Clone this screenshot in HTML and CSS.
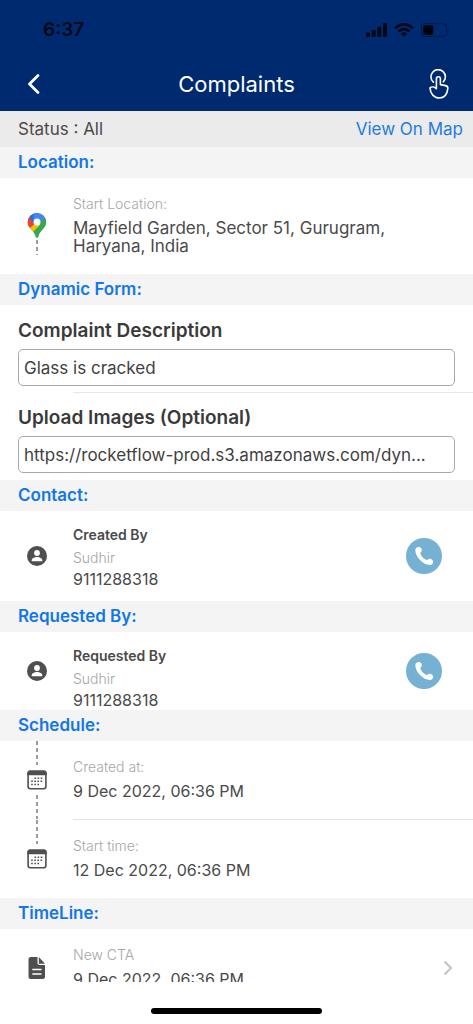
FILE: index.html
```
<!DOCTYPE html>
<html lang="en">
<head>
<meta charset="utf-8">
<meta name="viewport" content="width=device-width, initial-scale=1">
<title>Complaints</title>
<link rel="stylesheet" href="styles.css">
</head>
<body>
<svg class="defs" aria-hidden="true">
  <symbol id="person" viewBox="0 0 20 20">
    <circle cx="10" cy="10" r="10" fill="#4f4f4f"/>
    <circle cx="10" cy="7" r="2.9" fill="#fff"/>
    <path d="M4.7 15.2v-.9c0-2 3-3.300 5.300-3.300s5.300 1.300 5.300 3.300v.9z" fill="#fff"/>
  </symbol>
  <symbol id="calendar" viewBox="0 0 20 20">
    <rect x="1.100" y="1.400" width="17.800" height="17.300" rx="2.200" fill="#fff" stroke="#4f4f4f" stroke-width="1.600"/>
    <path d="M.3 5.200V3Q.3.600 2.800.600h14.400Q19.700.600 19.700 3v2.200z" fill="#4f4f4f"/>
    <path d="M7.500 8.300h8.500M4.200 11.300h12M4.200 14.500h9" stroke="#4f4f4f" stroke-width="1.500" stroke-dasharray="1.600 1.500" fill="none"/>
  </symbol>
  <symbol id="phone" viewBox="0 0 36 36">
    <circle cx="18" cy="18" r="18" fill="#74b1d2"/>
    <path d="M9.400 11.600c.3-2 2.200-3 4.100-2.500 2 .6 2.900 2.700 2 4.500-.4.700-1 1.200-1.300 1.700.9 2.900 3.300 5.500 6.200 6.700.9-.1 1.300-.8 2.200-1.100 1.900-.7 4 .3 4.500 2.200.5 2-.8 3.700-2.800 3.900-3.500.2-7.200-1.600-10.300-4.900-3.200-3.400-5-7.200-4.600-10.500z" fill="#fff"/>
  </symbol>
</svg>

<div class="screen">
  <header class="header">
    <div class="statusbar">
      <span class="clock">6:37</span>
      <span class="signals">
        <svg width="21" height="14" viewBox="0 0 21 14" fill="#000818"><rect y="9.500" width="4" height="4.500" rx="1"/><rect x="5.700" y="7" width="4" height="7" rx="1"/><rect x="11.300" y="3.800" width="4" height="10.200" rx="1"/><rect x="17" width="4" height="14" rx="1"/></svg>
        <svg width="20" height="14" viewBox="0 0 20 14" fill="none" stroke="#000818" stroke-width="2.600"><path d="M1 5.200Q10-2.800 19 5.200M4.400 8.600Q10 3.700 15.600 8.600"/><path d="M6.900 10.700Q10 8 13.100 10.700L10 13.800z" fill="#000818" stroke="none"/></svg>
        <svg width="29" height="14" viewBox="0 0 29 14"><rect x=".6" y=".6" width="25" height="12.800" rx="3.500" fill="none" stroke="#001c50" stroke-width="1.200"/><rect x="2.300" y="2.300" width="10" height="9.400" rx="1.500" fill="#00040c"/><path d="M27 4.500q2 2.500 0 5z" fill="#001c50"/></svg>
      </span>
    </div>
    <div class="navbar">
      <button class="nav-btn" aria-label="Back">
        <svg width="14" height="20" viewBox="0 0 14 20"><path d="M11 1.500 2.500 10l8.500 8.500" fill="none" stroke="#fff" stroke-width="2.700" stroke-linecap="round" stroke-linejoin="round"/></svg>
      </button>
      <h1 class="title">Complaints</h1>
      <button class="nav-btn nav-btn-end" aria-label="Actions">
        <svg width="20" height="30" viewBox="0 0 20 30" fill="none" stroke="#fff" stroke-width="1.600" stroke-linecap="round" stroke-linejoin="round"><path d="M4.400 13.200a7.200 7.200 0 1 1 10-.4"/><path d="M7.400 19.600V9.800a2 2 0 0 1 4 0v5.800l5.200 1c1.700.4 2.400 1.500 2.200 3.100-.5 5.300-3.200 9.300-8.500 9.300C5 29 1.300 24.800 1 18.900c1.700-1.500 4.500-1.100 6.400.7z"/></svg>
      </button>
    </div>
  </header>

  <main class="content">
    <div class="summary"><span>Status : All</span><a class="map-link" href="#map">View On Map</a></div>

    <h2 class="section-head">Location:</h2>
    <div class="row">
      <div class="rail">
        <span class="dash dash-none dash-long"></span>
        <svg class="icon" width="20" height="25" viewBox="0 0 20 25">
          <clipPath id="pin"><path d="M10 0a9.300 9.300 0 0 1 9.300 9.300c0 6-6.800 8.300-7.900 14.500-.3 1.500-2.500 1.500-2.800 0C7.500 17.600.7 15.300.7 9.300A9.300 9.300 0 0 1 10 0z"/></clipPath>
          <g clip-path="url(#pin)"><path fill="#34a853" d="M0 0h20v25H0z"/><path fill="#fbbc04" d="M0 8 8 8l5 4-9 9-4-4z"/><path fill="#ea4335" d="M0 2 4 2l6 7-8.500 7H0z"/><path fill="#1a73e8" d="M2 3 6-2l6 5-6 7z"/><path fill="#4285f4" d="M7-1h12v6l-9 5-4-3z"/></g>
          <circle cx="10" cy="9" r="3.500" fill="#fff"/>
        </svg>
        <span class="dash dash-short"></span>
      </div>
      <div class="details">
        <p class="label">Start Location:</p>
        <p class="value">Mayfield Garden, Sector 51, Gurugram, Haryana, India</p>
      </div>
    </div>

    <h2 class="section-head">Dynamic Form:</h2>
    <form class="form">
      <div class="field">
        <label class="field-label" for="description">Complaint Description</label>
        <input class="field-input" id="description" type="text" value="Glass is cracked">
      </div>
      <div class="field">
        <label class="field-label" for="images">Upload Images (Optional)</label>
        <input class="field-input" id="images" type="text" value="https://rocketflow-prod.s3.amazonaws.com/dyn...">
      </div>
    </form>

    <h2 class="section-head">Contact:</h2>
    <div class="row contact contact-roomy">
      <div class="rail rail-center"><svg width="20" height="20"><use href="#person"/></svg></div>
      <div class="details">
        <h3 class="name">Created By</h3>
        <p class="label contact-label">Sudhir</p>
        <p class="value value-number">9111288318</p>
      </div>
      <button class="call" aria-label="Call Created By"><svg width="36" height="36"><use href="#phone"/></svg></button>
    </div>

    <h2 class="section-head">Requested By:</h2>
    <div class="row contact">
      <div class="rail rail-center"><svg width="20" height="20"><use href="#person"/></svg></div>
      <div class="details">
        <h3 class="name">Requested By</h3>
        <p class="label contact-label">Sudhir</p>
        <p class="value value-number">9111288318</p>
      </div>
      <button class="call" aria-label="Call Requested By"><svg width="36" height="36"><use href="#phone"/></svg></button>
    </div>

    <h2 class="section-head">Schedule:</h2>
    <div class="row">
      <div class="rail"><span class="dash"></span><svg class="icon" width="20" height="20"><use href="#calendar"/></svg><span class="dash"></span></div>
      <div class="details">
        <p class="label">Created at:</p>
        <p class="value value-number">9 Dec 2022, 06:36 PM</p>
      </div>
    </div>
    <div class="divider"></div>
    <div class="row">
      <div class="rail"><span class="dash"></span><svg class="icon" width="20" height="20"><use href="#calendar"/></svg><span class="dash dash-none"></span></div>
      <div class="details">
        <p class="label">Start time:</p>
        <p class="value value-number">12 Dec 2022, 06:36 PM</p>
      </div>
    </div>

    <h2 class="section-head">TimeLine:</h2>
    <a class="row" href="#cta">
      <div class="rail rail-center"><svg width="18" height="22" viewBox="0 0 18 22"><path d="M3 0h6.500v6Q9.500 8 11.500 8H17v11.500Q17 22 14.500 22H3Q.5 22 .5 19.500v-17Q.5 0 3 0z" fill="#4f4f4f"/><path d="M10.800 0 17 6.700h-6.200z" fill="#4f4f4f"/><path d="M4.300 12.500h9.200M4.300 17h9.200" stroke="#fff" stroke-width="1.500"/></svg></div>
      <div class="details">
        <p class="label">New CTA</p>
        <p class="value value-number">9 Dec 2022, 06:36 PM</p>
      </div>
      <svg class="chevron" width="10" height="16" viewBox="0 0 10 16"><path d="m1.500 1.500 6.500 6.500-6.500 6.500" fill="none" stroke="#c2c2c2" stroke-width="2"/></svg>
    </a>
  </main>
  <footer class="home"><span class="home-bar"></span></footer>
</div>
</body>
</html>
```

FILE: styles.css
```
* { box-sizing: border-box; }

body {
  margin: 0;
  background: #fff;
  color: #4a4a4a;
  font-family: Inter, "Liberation Sans", sans-serif;
  font-size: 17px;
}

h1, h2, h3, p { margin: 0; }
button { padding: 0; border: 0; background: none; cursor: pointer; }
a { color: inherit; text-decoration: none; }
svg { display: block; flex: none; }
.defs { position: absolute; width: 0; height: 0; }

.screen { display: flex; flex-direction: column; height: 100vh; }

.header { flex: none; background: #002a70; }
.statusbar {
  display: flex;
  align-items: flex-end;
  justify-content: space-between;
  height: 41px;
  padding: 0 23px 0 43px;
}
.clock { color: #000818; font-size: 19px; font-weight: 600; line-height: 22px; }
.signals { display: flex; gap: 7px; padding-bottom: 4px; }
.navbar { display: flex; align-items: center; height: 70px; padding: 15px 24px 0; }
.nav-btn { display: flex; width: 40px; padding-left: 3px; }
.nav-btn-end { justify-content: flex-end; }
.title { flex: 1; color: #fff; font-size: 22px; font-weight: 400; line-height: 28px; text-align: center; }

.content { flex: 1; min-height: 0; overflow: hidden; }
.summary {
  display: flex;
  align-items: center;
  justify-content: space-between;
  height: 36px;
  padding: 0 10px 0 18px;
  background: #ebebeb;
}
.map-link { color: #1f7bdc; }

.section-head {
  padding-left: 18px;
  background: #f4f4f4;
  color: #1277e8;
  font-size: 17px;
  font-weight: 600;
  line-height: 31px;
}

.row { display: flex; }
.rail { display: flex; flex: none; flex-direction: column; align-items: center; width: 73px; }
.rail-center { justify-content: center; }
.icon { margin: 5px 0; }
.dash {
  flex: 1;
  width: 2px;
  background: repeating-linear-gradient(#9b9b9b 0 4px, transparent 4px 7px);
}
.dash-none { background: none; }
.dash-long { flex: 2; }
.dash-short { margin: -3px 0 19px; }

.details { flex: 1; min-width: 0; padding: 16px 60px 19px 0; }
.label { margin-bottom: 5px; color: #a6a6a6; font-size: 14px; font-weight: 300; line-height: 20px; }
.value { line-height: 18px; }
.value-number { font-size: 16px; }
.divider { height: 1px; margin-left: 73px; background: #e4e4e4; }

.form { padding-bottom: 7px; }
.field { padding: 12px 18px 6px; }
.field + .field { padding-bottom: 0; }
.field-label { display: block; margin-bottom: 5px; color: #3a3a3a; font-size: 19px; font-weight: 600; line-height: 27px; }
.field + .field::before {
  content: "";
  display: block;
  height: 1px;
  margin: -12px -18px 11px 55px;
  background: #e8e8e8;
}
.field-input {
  display: block;
  width: 100%;
  height: 37px;
  padding: 0 5px;
  border: 1px solid #a9a9a9;
  border-radius: 5px;
  background: #fff;
  color: #3f3f3f;
  font: inherit;
  text-overflow: ellipsis;
}

.contact .details { padding: 12px 0 0; }
.contact-roomy .details { padding-bottom: 12px; }
.name { font-size: 14px; font-weight: 600; line-height: 24px; }
.contact-label { margin: 0; line-height: 22px; }
.contact .value { line-height: 20px; }
.call { align-self: center; margin-right: 31px; border-radius: 50%; }
.chevron { align-self: center; margin-right: 20px; }

.home { display: flex; flex: none; justify-content: center; height: 42px; padding-top: 26px; }
.home-bar { width: 36%; height: 6px; border-radius: 3px; background: #000; }
```
